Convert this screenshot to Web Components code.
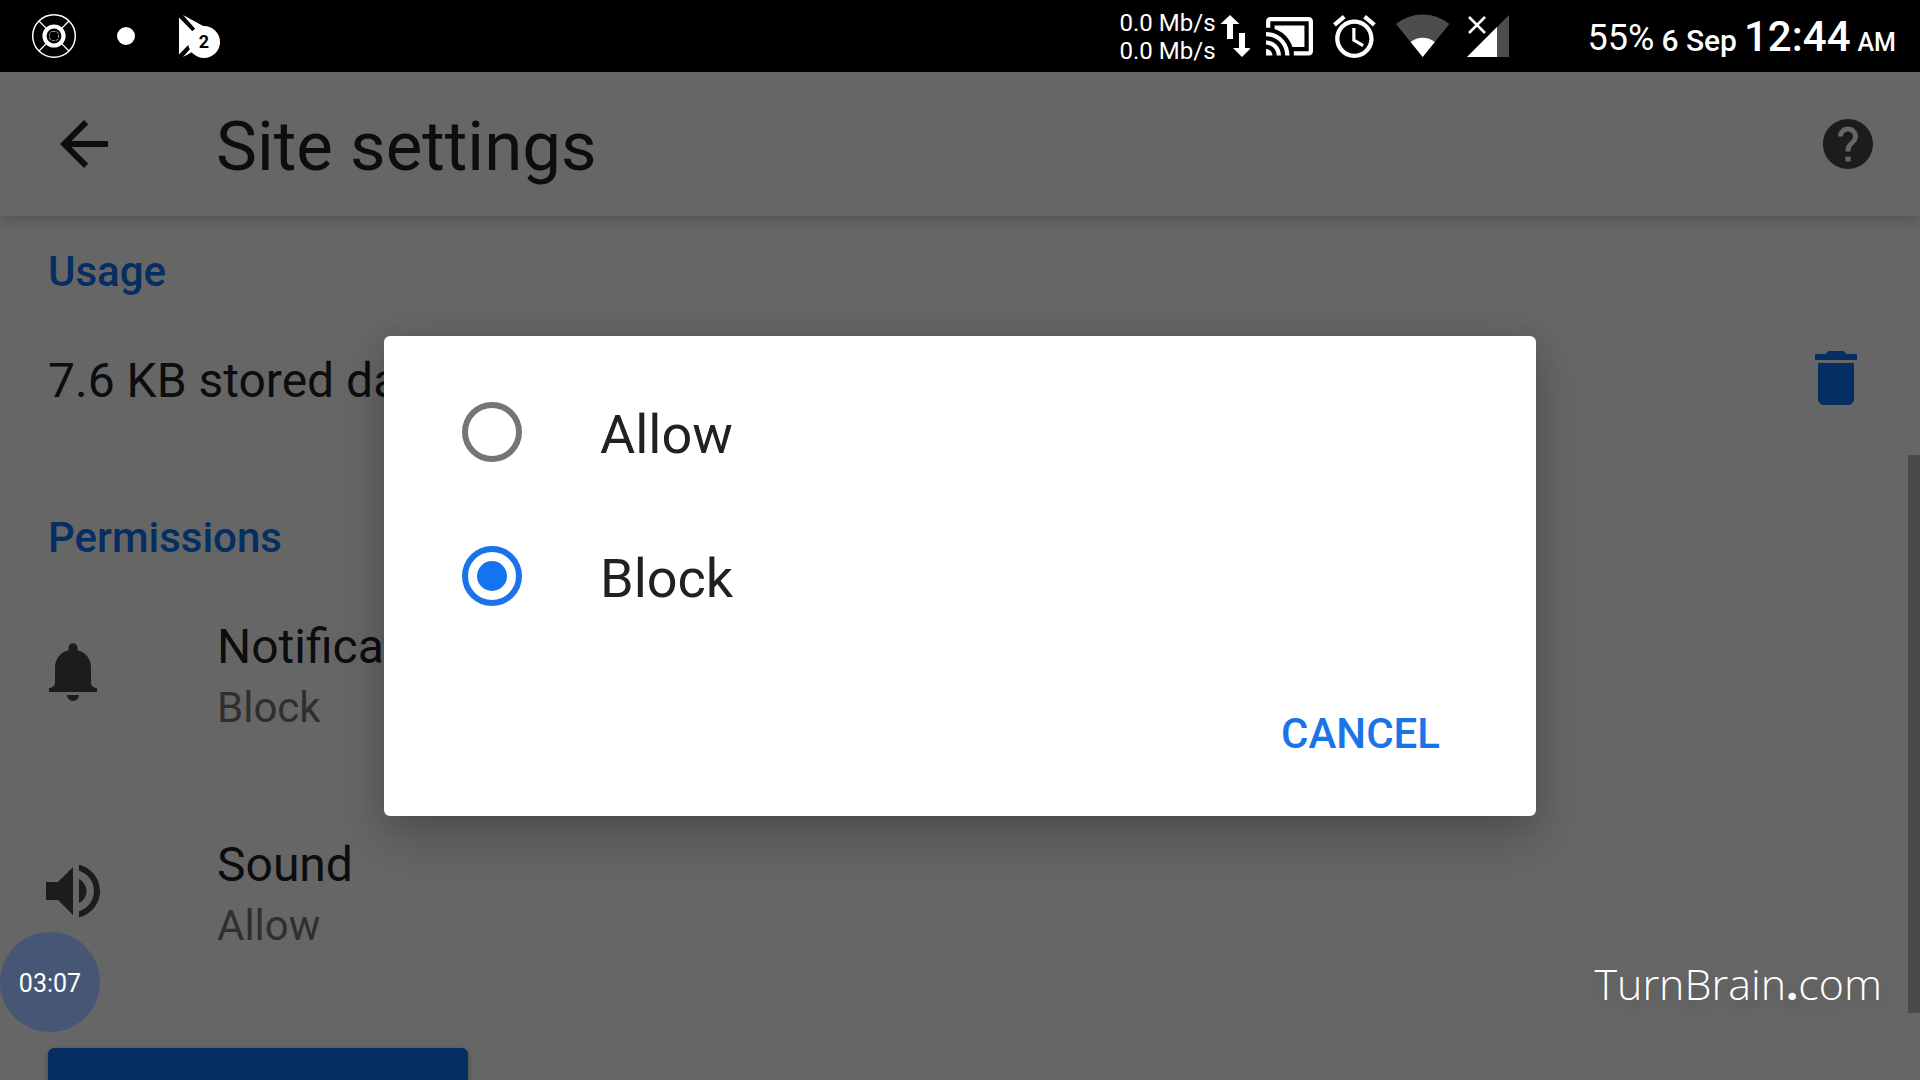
<!DOCTYPE html>
<html lang="en">
<head>
<meta charset="utf-8">
<title>Site settings</title>
<style>
    :root {
        --accent: #1a73e8;
        --accent-page: #0d73f5;
        --text: #202124;
        --muted: #757575;
        --icon: #434749;
        --scrim: rgba(0, 0, 0, 0.6);
    }

    html, body {
        margin: 0;
        height: 100%;
        overflow: hidden;
        font-family: Roboto, "Liberation Sans", sans-serif;
        color: var(--text);
        background: white;
    }
</style>
</head>
<body>
<phone-screen>
    <status-bar slot="status"></status-bar>
    <tool-bar>Site settings</tool-bar>
    <settings-list>
        <settings-section heading="Usage">
            <usage-row>7.6 KB stored data</usage-row>
        </settings-section>
        <settings-section heading="Permissions">
            <permission-row icon="bell" state="Block">Notifications</permission-row>
            <permission-row icon="volume" state="Allow">Sound</permission-row>
        </settings-section>
        <fill-button label="Clear and reset"></fill-button>
    </settings-list>
    <choice-dialog slot="dialog"></choice-dialog>
    <record-timer slot="float">03:07</record-timer>
    <water-mark slot="float"></water-mark>
</phone-screen>

<script>
const icons = {
    back: `<path d="M20 11H7.83l5.59-5.59L12 4l-8 8 8 8 1.41-1.41L7.83 13H20z"/>`,
    help: `<path d="M12 2C6.48 2 2 6.48 2 12s4.48 10 10 10 10-4.48 10-10S17.52 2 12 2zm1 17h-2v-2h2zm2.07-7.75l-.9.92C13.45 12.9 13 13.5 13 15h-2v-.5c0-1.1.45-2.1 1.17-2.83l1.24-1.26c.37-.36.59-.86.59-1.41 0-1.1-.9-2-2-2s-2 .9-2 2H8c0-2.21 1.79-4 4-4s4 1.79 4 4c0 .88-.36 1.68-.93 2.25z"/>`,
    trash: `<path d="M6 18c0 1.1.9 2 2 2h8c1.1 0 2-.9 2-2V6H6z"/><path d="M19 3h-3.5l-1-1h-5l-1 1H5v2h14z"/>`,
    bell: `<path d="M12 2.1c-.83 0-1.5.67-1.5 1.5v.8C7.8 5 6 7.3 6 10.2v4.9c0 1.3-.9 1.7-2 2v1.2h16v-1.2c-1.1-.3-2-.7-2-2v-4.9c0-2.9-1.8-5.2-4.5-5.800v-.8c0-.83-.67-1.5-1.5-1.5z"/><path d="M10 19.3h4c0 1.100-.9 2-2 2s-2-.9-2-2z"/>`,
    volume: `<path d="M3 9v6h4l5 5V4L7 9zm13.5 3c0-1.77-1.02-3.29-2.5-4.03v8.05c1.48-.73 2.5-2.25 2.5-4.02zM14 3.23v2.06c2.89.86 5 3.54 5 6.71s-2.11 5.85-5 6.71v2.06c4.01-.91 7-4.49 7-8.77s-2.99-7.86-7-8.77z"/>`
};

function icon(name) {
    return `<svg viewBox="0 0 24 24" aria-hidden="true">${icons[name]}</svg>`;
}

class BaseElement extends HTMLElement {
    constructor() {
        super();
        this.attachShadow({ mode: "open" });
    }

    connectedCallback() {
        this.shadowRoot.innerHTML = this.render();
    }
}

class PhoneScreen extends BaseElement {
    render() {
        return `
            <style>
                :host {
                    position: relative;
                    display: flex;
                    flex-direction: column;
                    height: 100vh;
                    overflow: hidden;
                }

                .app {
                    position: relative;
                    flex: 1;
                    min-height: 0;
                    overflow: hidden;
                }

                /* dims the whole app but not the status bar */
                .scrim {
                    position: absolute;
                    inset: 0;
                    background: var(--scrim);
                }

                .overlay {
                    position: absolute;
                    inset: 0;
                    display: grid;
                    place-items: center;
                }
            </style>
            <slot name="status"></slot>
            <div class="app">
                <slot></slot>
                <div class="scrim"></div>
            </div>
            <div class="overlay"><slot name="dialog"></slot></div>
            <slot name="float"></slot>
        `;
    }
}

class StatusBar extends BaseElement {
    render() {
        return `
            <style>
                :host {
                    display: flex;
                    align-items: center;
                    height: 72px;
                    padding: 0 24px 0 30px;
                    box-sizing: border-box;
                    background: black;
                    color: white;
                }

                svg {
                    display: block;
                    height: 48px;
                    fill: white;
                }

                .left, .icons {
                    display: flex;
                    align-items: center;
                }

                .left {
                    gap: 36px;
                    margin-right: auto;
                }

                .badged {
                    position: relative;
                }

                .badge {
                    position: absolute;
                    right: 0;
                    bottom: 2px;
                    width: 32px;
                    height: 32px;
                    border-radius: 50%;
                    background: white;
                    color: black;
                    font-size: 18px;
                    font-weight: 700;
                    line-height: 32px;
                    text-align: center;
                }

                .speed {
                    padding: 2px 4px 0 0;
                    font-size: 24px;
                    line-height: 28px;
                }

                .icons {
                    gap: 16px;
                    padding-right: 78px;
                }

                .battery {
                    padding: 4px 7px 0 0;
                    font-size: 36px;
                    line-height: 48px;
                }

                .clock {
                    display: flex;
                    align-items: baseline;
                    gap: 7px;
                    padding-top: 8px;
                    font-weight: 500;
                    font-size: 30px;
                    line-height: 48px;
                }

                .time {
                    font-size: 42px;
                }

                .half {
                    font-size: 25px;
                }
            </style>
            <div class="left">
                <svg viewBox="0 0 48 48" width="48" aria-hidden="true">
                    <g fill="none" stroke="white">
                        <circle cx="24" cy="24" r="21.300" stroke-width="1.5"/>
                        <circle cx="24" cy="24" r="9.500" stroke-width="4.200"/>
                        <rect x="19.500" y="19.500" width="9" height="9" rx="3" stroke-width=".6" stroke-dasharray="3 1"/>
                        <path stroke-width="1.200" d="M9 9l7 7M39 9l-7 7M9 39l7-7M39 39l-7-7"/>
                    </g>
                </svg>
                <svg viewBox="0 0 24 48" width="24" aria-hidden="true"><circle cx="12" cy="24" r="9"/></svg>
                <div class="badged">
                    <svg viewBox="0 0 46 48" width="46" aria-hidden="true">
                        <path d="M5 5.500L23 24 5 42.500zM9 3l22 12-7 5zM9 45l22-12-7-5z"/>
                    </svg>
                    <span class="badge">2</span>
                </div>
            </div>
            <div class="speed">0.0 Mb/s<br>0.0 Mb/s</div>
            <div class="icons">
                <svg viewBox="0 0 30 48" width="30" aria-hidden="true">
                    <path d="M10 3L.5 12H7v15h6V12h6.500zM22 45l9-9h-6V21h-6v15h-6z"/>
                </svg>
                <svg viewBox="1 .65 23.400 22.500" width="50" aria-hidden="true">
                    <path d="M1 18v3h3c0-1.660-1.340-3-3-3zm0-4v2c2.760 0 5 2.240 5 5h2c0-3.870-3.130-7-7-7zm18-7H5v1.630c3.960 1.280 7.090 4.410 8.370 8.370H19V7zM1 10v2c4.970 0 9 4.030 9 9h2c0-6.080-4.930-11-11-11zm20-7H3c-1.100 0-2 .9-2 2v3h2V5h18v14h-7v2h7c1.100 0 2-.9 2-2V5c0-1.100-.9-2-2-2z"/>
                </svg>
                <svg viewBox="1.500 .45 22.500 22.500" width="48" aria-hidden="true">
                    <path d="M22 5.720l-4.600-3.860-1.290 1.530 4.600 3.860L22 5.720zM7.880 3.390L6.600 1.860 2 5.710l1.290 1.530 4.590-3.850zM12.500 8H11v6l4.750 2.850.75-1.230-4-2.370V8zM12 4c-4.970 0-9 4.030-9 9s4.020 9 9 9c4.970 0 9-4.030 9-9s-4.030-9-9-9zm0 16c-3.870 0-7-3.130-7-7s3.130-7 7-7 7 3.130 7 7-3.130 7-7 7z"/>
                </svg>
                <svg viewBox="0 0 54 48" width="54" aria-hidden="true">
                    <path fill="#4d4d4d" d="M26.700 45L0 12a42.500 42.500 0 0 1 53.400 0z"/>
                    <path d="M26.700 45L14.600 30a19.300 19.300 0 0 1 24.200 0z"/>
                </svg>
                <svg viewBox="0 0 44 48" width="44" aria-hidden="true">
                    <path fill="#4d4d4d" d="M1 45L43 3v42z"/>
                    <path d="M1 45l30-30v30z"/>
                    <path stroke="white" stroke-width="2.500" d="M3 5l16 16M19 5L3 21"/>
                </svg>
            </div>
            <span class="battery">55%</span>
            <div class="clock">
                <span>6 Sep</span>
                <span class="time">12:44</span>
                <span class="half">AM</span>
            </div>
        `;
    }
}

class ToolBar extends BaseElement {
    render() {
        return `
            <style>
                :host {
                    position: relative;
                    display: flex;
                    align-items: center;
                    height: 144px;
                    padding: 0 42px 0 48px;
                    box-sizing: border-box;
                    background: white;
                    box-shadow: 0 4px 14px rgba(0, 0, 0, 0.2);
                }

                button {
                    padding: 0;
                    border: 0;
                    background: none;
                }

                svg {
                    display: block;
                    width: 72px;
                    fill: var(--text);
                }

                .help svg {
                    width: 60px;
                    fill: var(--icon);
                }

                h1 {
                    flex: 1;
                    margin: 0;
                    padding: 6px 0 0 96px;
                    font-size: 69px;
                    line-height: 84px;
                    font-weight: 400;
                }
            </style>
            <button aria-label="Back">${icon("back")}</button>
            <h1><slot></slot></h1>
            <button class="help" aria-label="Help">${icon("help")}</button>
        `;
    }
}

class SettingsList extends BaseElement {
    render() {
        return `
            <style>
                :host {
                    display: flex;
                    flex-direction: column;
                    align-items: stretch;
                    gap: 48px;
                    padding-top: 30px;
                }

                .scrollbar {
                    position: absolute;
                    top: 383px;
                    right: 0;
                    width: 12px;
                    height: 558px;
                    background: #b9b9b9;
                }
            </style>
            <slot></slot>
            <div class="scrollbar"></div>
        `;
    }
}

class SettingsSection extends BaseElement {
    render() {
        return `
            <style>
                :host {
                    display: block;
                }

                h2 {
                    margin: 0;
                    padding: 0 48px;
                    font-size: 42px;
                    line-height: 52px;
                    font-weight: 500;
                    color: var(--accent-page);
                }
            </style>
            <h2>${this.getAttribute("heading")}</h2>
            <slot></slot>
        `;
    }
}

class UsageRow extends BaseElement {
    render() {
        return `
            <style>
                :host {
                    display: flex;
                    align-items: center;
                    justify-content: space-between;
                    height: 166px;
                    padding: 0 48px;
                    font-size: 48px;
                    line-height: 70px;
                }

                button {
                    padding: 0;
                    border: 0;
                    background: none;
                }

                svg {
                    display: block;
                    width: 72px;
                    fill: var(--accent-page);
                }
            </style>
            <span><slot></slot></span>
            <button aria-label="Delete stored data">${icon("trash")}</button>
        `;
    }
}

class PermissionRow extends BaseElement {
    render() {
        return `
            <style>
                :host {
                    display: flex;
                    align-items: center;
                    gap: 108px;
                    height: 218px;
                    padding: 0 37px;
                }

                svg {
                    width: 72px;
                    fill: var(--icon);
                }

                .title {
                    font-size: 48px;
                    line-height: 70px;
                }

                .state {
                    font-size: 42px;
                    line-height: 52px;
                    color: var(--muted);
                }
            </style>
            ${icon(this.getAttribute("icon"))}
            <div>
                <div class="title"><slot></slot></div>
                <div class="state">${this.getAttribute("state")}</div>
            </div>
        `;
    }
}

class FillButton extends BaseElement {
    render() {
        return `
            <style>
                :host {
                    display: block;
                    padding: 0 48px;
                }

                button {
                    width: 420px;
                    height: 108px;
                    border: 0;
                    border-radius: 6px;
                    background: var(--accent-page);
                    box-shadow: 0 2px 6px rgba(0, 0, 0, 0.3);
                }
            </style>
            <button aria-label="${this.getAttribute("label")}"></button>
        `;
    }
}

class ChoiceDialog extends BaseElement {
    render() {
        return `
            <style>
                :host {
                    width: 60%;
                    margin-top: 72px;
                    padding-top: 24px;
                    border-radius: 6px;
                    background: white;
                    box-shadow: 0 22px 48px rgba(0, 0, 0, 0.22), 0 0 28px rgba(0, 0, 0, 0.08);
                }

                label {
                    display: flex;
                    align-items: center;
                    gap: 78px;
                    height: 144px;
                    padding: 0 78px;
                    font-size: 54px;
                    line-height: 72px;
                }

                label span {
                    padding-top: 6px;
                }

                input {
                    appearance: none;
                    display: grid;
                    place-items: center;
                    width: 60px;
                    height: 60px;
                    margin: 0;
                    border: 6px solid var(--muted);
                    border-radius: 50%;
                }

                input:checked {
                    border-color: var(--accent);
                }

                input:checked::before {
                    content: "";
                    width: 30px;
                    height: 30px;
                    border-radius: 50%;
                    background: #1473f0;
                }

                .actions {
                    display: flex;
                    justify-content: flex-end;
                    padding: 36px 72px 32px;
                }

                button {
                    height: 100px;
                    padding: 0 24px;
                    border: 0;
                    background: none;
                    color: var(--accent);
                    font: 500 42px/52px Roboto, sans-serif;
                }
            </style>
            <label><input type="radio" name="permission"><span>Allow</span></label>
            <label><input type="radio" name="permission" checked><span>Block</span></label>
            <div class="actions"><button>CANCEL</button></div>
        `;
    }
}

class RecordTimer extends BaseElement {
    render() {
        return `
            <style>
                :host {
                    position: absolute;
                    left: 0;
                    bottom: 48px;
                    width: 100px;
                    height: 100px;
                    border-radius: 50%;
                    background: #475675;
                    color: white;
                    font-size: 25px;
                    line-height: 104px;
                    text-align: center;
                }
            </style>
            <slot></slot>
        `;
    }
}

class WaterMark extends BaseElement {
    render() {
        return `
            <style>
                :host {
                    position: absolute;
                    right: 38px;
                    bottom: 66px;
                    color: white;
                    font: 300 43px/60px "Open Sans", sans-serif;
                    text-shadow: 0 6px 14px rgba(0, 0, 0, 0.2);
                }

                b {
                    font-weight: 700;
                }
            </style>
            TurnBrain<b>.</b>com
        `;
    }
}

window.customElements.define("phone-screen", PhoneScreen);
window.customElements.define("status-bar", StatusBar);
window.customElements.define("tool-bar", ToolBar);
window.customElements.define("settings-list", SettingsList);
window.customElements.define("settings-section", SettingsSection);
window.customElements.define("usage-row", UsageRow);
window.customElements.define("permission-row", PermissionRow);
window.customElements.define("fill-button", FillButton);
window.customElements.define("choice-dialog", ChoiceDialog);
window.customElements.define("record-timer", RecordTimer);
window.customElements.define("water-mark", WaterMark);
</script>
</body>
</html>
